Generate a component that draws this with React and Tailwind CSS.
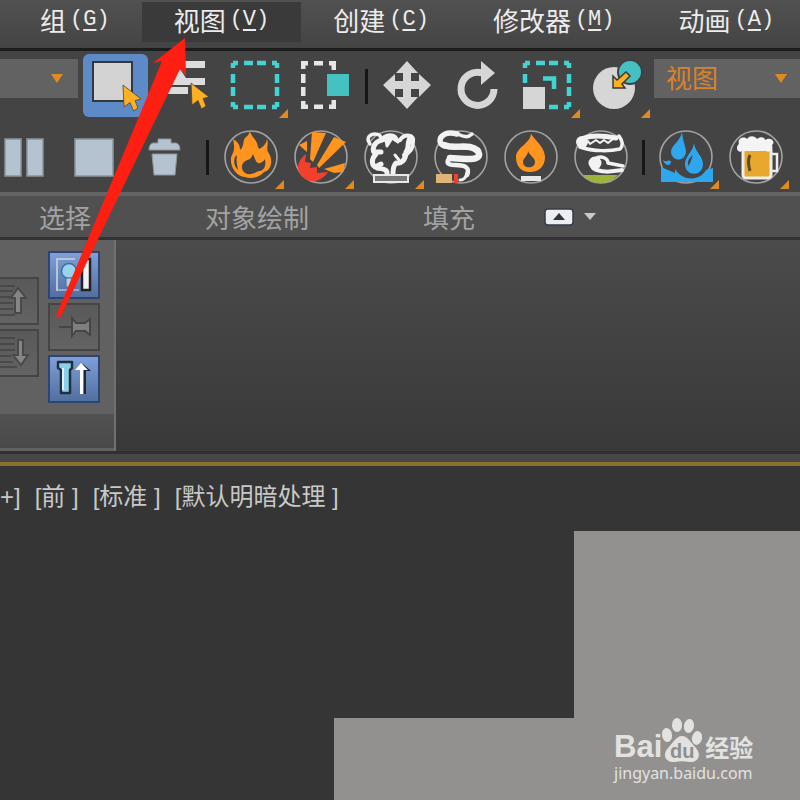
import { useState } from "react";

const menus = [
  { name: "组", hotkey: "G" },
  { name: "视图", hotkey: "V" },
  { name: "创建", hotkey: "C" },
  { name: "修改器", hotkey: "M" },
  { name: "动画", hotkey: "A" },
];

const tabs = [
  { name: "选择", className: "w-[130px]" },
  { name: "对象绘制", className: "w-[254px]" },
  { name: "填充", className: "w-[130px]" },
];

const viewportLabels = ["+]", "[前 ]", "[标准 ]", "[默认明暗处理 ]"];

// One toolbar cell: 70px drawing, optional flyout triangle in the corner
const Tool = ({ label, flyout, children }) => (
  <button type="button" aria-label={label} className="h-[70px] w-[70px] shrink-0">
    <svg viewBox="0 0 70 70" className="h-[70px] w-[70px]">
      {children}
      {flyout && <path d="M68 58V67H59Z" fill="#e08a22" />}
    </svg>
  </button>
);

const Ring = () => <circle cx="35" cy="35" r="26" fill="none" stroke="#a2a2a2" strokeWidth="1.6" />;

const Separator = ({ className }) => (
  <div className={`flex h-[70px] shrink-0 items-center justify-center ${className}`}>
    <div className="h-[35px] w-[3px] bg-[#161616]" />
  </div>
);

const Cursor = () => (
  <path d="M0 0L18 14L12 15.500L15 23L10.500 26L7 17.500L1 22Z" fill="#fdb022" stroke="#4c4433" strokeWidth="0.8" />
);

const DashedBox = () => (
  <rect x="13" y="12" width="44" height="44" fill="none" stroke="#43d3d3" strokeWidth="4.500" strokeDasharray="5 6 9 4 9 6 5 0" />
);

const MainToolbar = () => (
  <div className="flex h-[71px] items-start overflow-hidden">
    <div className="relative mr-[2px] mt-2 h-[39px] w-[78px] shrink-0">
      <select aria-label="选择过滤器" className="h-full w-full appearance-none bg-[#626262]">
        <option></option>
      </select>
      <svg viewBox="0 0 12 10" className="pointer-events-none absolute right-[15px] top-[15px] h-[10px] w-[12px]">
        <path d="M0 0H12L6 9Z" fill="#e08a22" />
      </svg>
    </div>
    <Tool label="选择对象">
      <rect x="3" y="3" width="65" height="63" rx="6" fill="#5c8bc8" />
      <rect x="13" y="11" width="39" height="39" fill="#d3d3d3" stroke="#34383e" strokeWidth="2" />
      <g transform="translate(43 34)"><Cursor /></g>
    </Tool>
    <Tool label="按名称选择">
      <path d="M18 10H55V17H18ZM20 27H55V34H20ZM18 36H38V43H18ZM30 18L36 27H24Z" fill="#dcdcdc" />
      <g transform="translate(41 32)"><Cursor /></g>
    </Tool>
    <Tool label="矩形选择区域" flyout>
      <DashedBox />
    </Tool>
    <Tool label="窗口/交叉">
      <path d="M11 10H18V14.500H15.500V18H11ZM24 10H33V14.500H24ZM39 10H46V19H41.500V14.500H39ZM11 23H15.500V32H11ZM11 36H15.500V45H11ZM11 50H15.500V53.500H18V58H11ZM24 53.500H33V58H24ZM39 53.500H41.500V49H46V58H39Z" fill="#e6e6e6" />
      <rect x="37" y="23" width="22" height="22" fill="#45c1c1" />
    </Tool>
    <Separator className="w-[12px]" />
    <Tool label="移动">
      <path d="M35 10L46 22H39V30H47V23L59 34L47 46V38H39V46H46L35 58L24 46H31V38H23V46L11 34L23 23V30H31V22H24Z" fill="#d6d6d6" />
    </Tool>
    <Tool label="旋转">
      <path d="M52 38A16.500 16.500 0 1 1 40 22" fill="none" stroke="#d6d6d6" strokeWidth="7" />
      <path d="M39 10L53 22L39 34Z" fill="#d6d6d6" />
    </Tool>
    <Tool label="缩放" flyout>
      <DashedBox />
      <rect x="9" y="34" width="26" height="26" fill="#444" />
      <rect x="11" y="36" width="22" height="22" fill="#d6d6d6" />
      <path d="M31 27.500H42V38" fill="none" stroke="#43d3d3" strokeWidth="4.500" />
    </Tool>
    <Tool label="放置" flyout>
      <circle cx="32" cy="37" r="21" fill="#d6d6d6" />
      <circle cx="48" cy="21" r="12" fill="#45c1c1" stroke="#3b4242" strokeWidth="2" />
      <path d="M44 21L48 25L40 33L43 37H31V25L35 29Z" fill="#fdb022" stroke="#383838" strokeWidth="1.500" />
    </Tool>
    <div className="relative ml-[2px] mt-2 h-[39px] min-w-[160px] flex-1">
      <select
        aria-label="参考坐标系"
        className="h-full w-full appearance-none bg-[#626262] pb-1 pl-3 text-[26px] leading-[35px] text-[#d9832b]"
      >
        <option>视图</option>
      </select>
      <svg viewBox="0 0 12 10" className="pointer-events-none absolute left-[121px] top-[15px] h-[10px] w-[12px]">
        <path d="M0 0H12L6 9Z" fill="#e08a22" />
      </svg>
    </div>
  </div>
);

const EffectsToolbar = () => (
  <div className="flex h-[70px] overflow-hidden">
    <button type="button" aria-label="暂停" className="w-[59px] shrink-0">
      <svg viewBox="0 0 59 70" className="h-[70px] w-[59px]">
        <path d="M5 17H21V54H5ZM27 17H43V54H27Z" fill="#b5c2cf" stroke="#8b949c" strokeWidth="1.500" />
      </svg>
    </button>
    <Tool label="停止">
      <rect x="16" y="17" width="38" height="37" fill="#b5c2cf" stroke="#8b949c" strokeWidth="1.500" />
    </Tool>
    <Tool label="删除">
      <path d="M29 21V17H42V21H47Q51 22 51 28H20Q20 22 24 21ZM23 32H48L46 53H25Z" fill="#b5c2cf" stroke="#8b949c" strokeWidth="1" />
    </Tool>
    <Separator className="w-[17px]" />
    <Tool label="火焰" flyout>
      <Ring />
      <path
        fillRule="evenodd"
        d="M34 9C35 15 41 17 42 25Q43 28 45 26Q50 23 51 17C53 23 50 26 52 30C58 38 55 49 48 50C43 56 35 57 29 55C20 54 14 45 15 36C16 31 20 30 17 17C22 20 24 23 24 28C29 24 26 18 30 15Q33 13 34 9ZM37 32C35 38 32 37 28 40C24 44 26 50 31 52C38 53 40 49 44 49C49 48 50 43 49 37C46 42 41 43 39 37ZM19 35C17 40 19 45 22 48C21 43 20 39 21 33Z"
        fill="#ff941f"
      />
    </Tool>
    <Tool label="爆炸" flyout>
      <Ring />
      <path d="M26 10L40 11L27 40L24 37ZM48 15L60 20L33 46L31 43ZM38 47L59 41L57 50L48 51ZM13 23L21 19V30Z" fill="#ff941f" />
      <path d="M20 32C12 38 10 46 14 52C20 61 33 63 42 50L31 51V45L24 46L25 41L19 40Z" fill="#f43f2d" />
    </Tool>
    <Tool label="烟雾" flyout>
      <Ring />
      <g fill="none" stroke="#f2f2f2" strokeLinecap="round" strokeLinejoin="round">
        <path d="M14 22C9 15 15 12 19 12C23 12 25 14 25 17" strokeWidth="3.500" />
        <path d="M26 18C17 20 15 29 20 32C15 37 15 44 21 46C27 47 31 47 31 51" strokeWidth="5" />
        <path d="M20 30L25 30M21 44L25 42" strokeWidth="5" />
        <path d="M24 19C29 11 40 10 42 20L36 16L31 24L30 18Z" fill="#f2f2f2" strokeWidth="3" />
        <path d="M44 18C49 11 59 13 57 20C57 27 54 31 48 33" strokeWidth="4" />
        <path d="M55 15C50 20 54 26 50 30C50 38 45 42 40 41C37 44 37 47 37 51" strokeWidth="5" />
        <path d="M39 33L43 38" strokeWidth="3" />
      </g>
      <rect x="18" y="53" width="34" height="7" fill="#777" stroke="#e8e8e8" strokeWidth="2" />
    </Tool>
    <Tool label="香烟">
      <Ring />
      <g fill="none" stroke="#f2f2f2" strokeLinecap="round">
        <path d="M46 12C40 18 34 12 28 11" strokeWidth="3.500" />
        <path d="M31 12C21 9 14 13 14 19C15 27 26 24 40 25" strokeWidth="5.500" />
        <path d="M18 23C28 27 35 23 44 25C56 28 56 37 45 37C36 37 29 36 24 36" strokeWidth="6.500" />
        <path d="M26 36C19 38 20 43 29 43C40 43 44 46 41 53" strokeWidth="4.500" />
        <path d="M41 51C40 56 37 58 34 58" strokeWidth="3" />
      </g>
      <rect x="10" y="52" width="16" height="9" fill="#dfb577" />
      <rect x="28" y="52" width="4" height="9" fill="#f43f2d" />
    </Tool>
    <Tool label="蜡烛">
      <Ring />
      <path
        fillRule="evenodd"
        d="M35 10C34 15 49 23 49 35C49 44 43 50 34 50C25 50 20 44 20 35C20 25 36 21 35 10ZM32 29C34 34 39 36 39 40C39 47 27 47 27 40C27 36 32 34 32 29Z"
        fill="#ff941f"
      />
      <rect x="25" y="54" width="20" height="5" fill="#e8e8e8" />
    </Tool>
    <Tool label="龙卷风">
      <Ring />
      <circle cx="16" cy="20" r="6" fill="#f2f2f2" />
      <g fill="none" stroke="#f2f2f2" strokeLinecap="round" strokeLinejoin="round">
        <path d="M18 16C26 13 40 14 50 16" strokeWidth="5" />
        <path d="M14 25C28 30 45 29 54 27C58 23 56 18 53 14" strokeWidth="3.500" />
        <path d="M22 19L24 22L30 18L34 21L38 18L42 21L47 17" strokeWidth="2" />
        <path d="M29 37C35 33 42 36 42 41L57 44" strokeWidth="3.500" />
        <path d="M27 46C36 52 48 49 56 48" strokeWidth="4" />
      </g>
      <circle cx="29" cy="41" r="6.500" fill="#f2f2f2" />
      <path d="M17 53H52Q44 61 35 61Q24 61 17 53Z" fill="#9bb53a" />
    </Tool>
    <Separator className="w-[15px]" />
    <Tool label="液体" flyout>
      <Ring />
      <path d="M10 45L24 51V47C31 59 48 60 55 48L62 46V60H10ZM12 38C16 41 16 37 20 39C20 45 14 44 12 38Z" fill="#2fa7ee" />
      <path d="M31 10C32 21 35 24 35 30C34 40 21 40 20 30C20 23 29 20 31 10Z" fill="#2fa7ee" />
      <path
        fillRule="evenodd"
        d="M43 21C44 30 52 34 52 42C52 55 34 55 34 42C34 34 42 30 43 21ZM42 33C36 38 37 40 37 44C40 41 40 38 42 33Z"
        fill="#2fa7ee"
      />
    </Tool>
    <Tool label="啤酒" flyout>
      <Ring />
      <path d="M50 32H56V49H50" fill="none" stroke="#ededed" strokeWidth="2.500" />
      <rect x="22" y="25" width="28" height="31" rx="3" fill="#e8a72e" stroke="#ededed" strokeWidth="3" />
      <path d="M20 30C15 30 15 24 18 22C16 16 23 14 26 17C29 13 34 14 36 17C39 14 44 15 44 18C50 14 55 20 51 23C53 28 48 31 45 29H20Z" fill="#f4f4f4" />
      <path d="M29 33Q26 39 29 49" fill="none" stroke="#5f4a24" strokeWidth="3" />
    </Tool>
    <div className="w-[10px] shrink-0" />
  </div>
);

const PanelButton = ({ label, active, className, viewBox = "0 0 48 44", children }) => (
  <button
    type="button"
    aria-label={label}
    className={`h-12 border-2 ${className} ${
      active ? "border-[#2f4475] bg-linear-to-b from-[#7e9fd8] to-[#526f9f]" : "border-[#454545] bg-linear-to-b from-[#595959] to-[#636363]"
    }`}
  >
    <svg viewBox={viewBox} className="h-11 w-full">
      {children}
    </svg>
  </button>
);

const StackPanel = () => (
  <aside className="w-[116px] shrink-0 border-r-2 border-[#707070] bg-[#616161]">
    <div className="flex h-[174px] gap-[9px] pt-[11px]">
      <div className="mt-[26px] flex w-[39px] flex-col gap-1">
        <PanelButton label="上移" className="w-full border-l-0" viewBox="0 0 37 44">
          <path d="M0 7H15M0 12H13M0 18H11M0 24H13M0 30H13M0 36H15" stroke="#434343" strokeWidth="1.500" />
          <path d="M18 9L26 19H21V34H15V19H11Z" fill="#858585" stroke="#494949" strokeWidth="2" />
        </PanelButton>
        <PanelButton label="下移" className="w-full border-l-0" viewBox="0 0 37 44">
          <path d="M0 7H15M0 13H15M0 19H15M0 25H11M0 31H13M0 36H17" stroke="#434343" strokeWidth="1.500" />
          <path d="M21 34L28 24H23V9H18V24H13Z" fill="#858585" stroke="#494949" strokeWidth="2" />
        </PanelButton>
      </div>
      <div className="flex w-[52px] flex-col gap-1">
        <PanelButton label="显示" active className="w-full">
          <path d="M7 38V6H25" fill="none" stroke="#b9c5d7" strokeWidth="2" />
          <circle cx="19" cy="18" r="7.500" fill="#9bd2ec" stroke="#3b72a0" strokeWidth="1.500" />
          <path d="M16 25H22V34H16Z" fill="#b3cce0" stroke="#3b72a0" />
          <path d="M8 37H29" stroke="#8fa9cf" strokeWidth="2" />
          <rect x="32" y="6" width="8" height="31" fill="#f2f2f2" stroke="#222" strokeWidth="2.500" />
        </PanelButton>
        <PanelButton label="锁定堆栈" className="w-full">
          <path d="M9 22H21M22 13V31L26 26H35L40 30V14L35 18H26Z" fill="#7e7e7e" stroke="#454545" strokeWidth="2" />
        </PanelButton>
        <PanelButton label="显示最终结果" active className="w-full">
          <path d="M8 5H22V11L20 13V36H11V13L8 11Z" fill="#8bd0ea" stroke="#22303d" strokeWidth="2.500" strokeLinejoin="round" />
          <path d="M13 11V33" stroke="#daf4fb" strokeWidth="2" />
          <path d="M33 7L41 14H36V37H34V14Z" fill="#1f2735" />
          <path d="M31 6L38 13H33V37H30V13H25Z" fill="#fff" />
        </PanelButton>
      </div>
    </div>
    <div className="h-[34px] bg-linear-to-b from-[#525252] to-[#494949]" />
  </aside>
);

const Watermark = () => (
  <div className="absolute bottom-4 right-[45px] w-[141px] text-[#e2e2e1]">
    <div className="flex h-[46px] items-end">
      <span className="font-['Liberation_Sans',sans-serif] text-[31px] font-bold leading-[30px]">Bai</span>
      <span className="relative h-[46px] w-[40px] shrink-0">
        <svg viewBox="0 0 40 46" className="h-[46px] w-[40px]">
          <g fill="#e2e2e1">
            <ellipse cx="5" cy="19" rx="5" ry="7" transform="rotate(-8 5 19)" />
            <ellipse cx="15" cy="9" rx="5" ry="7" />
            <ellipse cx="27" cy="10" rx="5" ry="7" transform="rotate(10 27 10)" />
            <ellipse cx="35" cy="22" rx="5" ry="7" transform="rotate(12 35 22)" />
            <path d="M20 20C26 20 29 27 34 32C41 41 34 47 27 46C22 45 18 45 13 46C5 47 -1 40 6 32C11 27 14 20 20 20Z" />
          </g>
        </svg>
        <span className="absolute inset-x-0 bottom-[1px] text-center font-['Liberation_Sans',sans-serif] text-[20px] font-bold leading-5 text-[#8f8e8c]">
          du
        </span>
      </span>
      <span className="ml-[3px] shrink-0 text-[24px] font-bold leading-[30px]">经验</span>
    </div>
    <a href="#jingyan" className="block whitespace-nowrap font-['Noto_Sans',sans-serif] text-[16px] leading-[22px]">
      jingyan.baidu.com
    </a>
  </div>
);

const Viewport = () => (
  <main className="relative min-h-[334px] flex-1 overflow-hidden bg-[#353535]">
    <div className="flex gap-[14px] pt-4 font-['Liberation_Sans','Noto_Sans_CJK_SC',sans-serif] text-[24px] leading-[30px] text-[#c8c8c8]">
      {viewportLabels.map((label) => (
        <button key={label} type="button" className="whitespace-nowrap">
          {label}
        </button>
      ))}
    </div>
    {/* Scene geometry */}
    <div className="absolute bottom-0 left-[574px] right-0 top-[65px] bg-[#92918f]" />
    <div className="absolute bottom-0 left-[334px] right-0 top-[252px] bg-[#92918f]" />
    <Watermark />
  </main>
);

const App = () => {
  const [activeMenu, setActiveMenu] = useState("V");

  return (
    <div className="relative flex min-h-screen flex-col overflow-hidden bg-[#444444] font-['Noto_Sans_CJK_SC',sans-serif]">
      {/* Menu bar */}
      <nav className="flex h-[51px] items-start border-b-[3px] border-[#1c1c1c] bg-linear-to-b from-[#515151] to-[#444444] pl-2 pt-[2px]">
        {menus.map(({ name, hotkey }) => (
          <button
            key={hotkey}
            type="button"
            onClick={() => setActiveMenu(hotkey)}
            className={`flex h-10 shrink-0 items-center gap-1 px-8 pb-1 text-[26px] leading-9 text-[#ececec] ${
              activeMenu === hotkey ? "bg-[#3a3a3a]" : ""
            }`}
          >
            {name}
            <span className="font-['Liberation_Mono',monospace] text-[22px]">
              (<u className="underline-offset-4">{hotkey}</u>)
            </span>
          </button>
        ))}
      </nav>

      <MainToolbar />
      <EffectsToolbar />

      {/* Ribbon tabs */}
      <div className="flex h-[48px] items-center border-b-[3px] border-t-4 border-b-[#333333] border-t-[#646464] bg-[#505050] text-[26px] leading-10 text-[#a3a3a3]">
        {tabs.map(({ name, className }) => (
          <button key={name} type="button" className={`shrink-0 ${className}`}>
            {name}
          </button>
        ))}
        <button type="button" aria-label="最小化功能区" className="ml-[30px] flex items-center gap-[10px]">
          <svg viewBox="0 0 30 18" className="h-[18px] w-[30px]">
            <rect x="1" y="1" width="28" height="16" rx="3" fill="#eceef2" stroke="#353d4a" strokeWidth="1.500" />
            <path d="M15 5L21 12H9Z" fill="#30343c" />
          </svg>
          <svg viewBox="0 0 12 8" className="h-2 w-3">
            <path d="M0 0H12L6 7Z" fill="#c9c9c9" />
          </svg>
        </button>
      </div>

      {/* Ribbon body */}
      <div className="flex h-[214px] shrink-0 border-b-[3px] border-[#303030] bg-linear-to-b from-[#4b4b4b] to-[#393939]">
        <StackPanel />
      </div>
      <div className="h-[12px] shrink-0 border-b-4 border-[#8a7028] bg-[#474747]" />

      <Viewport />

      {/* Pointer to the view menu */}
      <svg viewBox="0 0 200 330" className="pointer-events-none absolute left-0 top-0 h-[330px] w-[200px]">
        <path d="M185 38L153 63L162 61L56 316L60 318L180 69L186 76Z" fill="#ff1e12" />
      </svg>
    </div>
  );
};

export default App;
